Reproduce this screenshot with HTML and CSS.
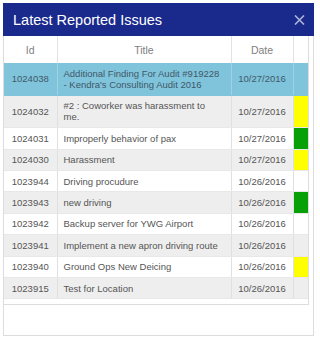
FILE: index.html
```html
<!DOCTYPE html>
<html>
<head>
<meta charset="utf-8">
<link rel="stylesheet" href="styles.css">
</head>
<body>
<div class="panel">
  <div class="panel-head">
    <span class="panel-title">Latest Reported Issues</span>
    <svg class="close" width="11" height="10" viewBox="0 0 11 10"><path d="M1 0.5L10 9.5M10 0.5L1 9.5" stroke="#aeb3d6" stroke-width="1.6" fill="none"/></svg>
  </div>
  <div class="scroll">
    <table class="grid">
      <colgroup><col class="c-id"><col class="c-title"><col class="c-date"><col class="c-flag"></colgroup>
      <thead>
        <tr><th>Id</th><th>Title</th><th>Date</th><th></th></tr>
      </thead>
      <tbody>
        <tr class="sel"><td class="id">1024038</td><td>Additional Finding For Audit #919228 - Kendra's Consulting Audit 2016</td><td class="date">10/27/2016</td><td></td></tr>
        <tr><td class="id">1024032</td><td>#2 : Coworker was harassment to me.</td><td class="date">10/27/2016</td><td class="yellow"></td></tr>
        <tr><td class="id">1024031</td><td>Improperly behavior of pax</td><td class="date">10/27/2016</td><td class="green"></td></tr>
        <tr><td class="id">1024030</td><td>Harassment</td><td class="date">10/27/2016</td><td class="yellow"></td></tr>
        <tr><td class="id">1023944</td><td>Driving procudure</td><td class="date">10/26/2016</td><td></td></tr>
        <tr><td class="id">1023943</td><td>new driving</td><td class="date">10/26/2016</td><td class="green"></td></tr>
        <tr><td class="id">1023942</td><td>Backup server for YWG Airport</td><td class="date">10/26/2016</td><td></td></tr>
        <tr><td class="id">1023941</td><td>Implement a new apron driving route</td><td class="date">10/26/2016</td><td></td></tr>
        <tr><td class="id">1023940</td><td>Ground Ops New Deicing</td><td class="date">10/26/2016</td><td class="yellow"></td></tr>
        <tr><td class="id">1023915</td><td>Test for Location</td><td class="date">10/26/2016</td><td></td></tr>
      </tbody>
    </table>
  </div>
</div>
</body>
</html>
```
FILE: styles.css
```css
html, body {
  margin: 0;
  padding: 0;
  background: #ffffff;
}
body {
  padding: 3px 0 0 3px;
  font-family: "Liberation Sans", Arial, sans-serif;
}
.panel {
  width: 309px;
  height: 331px;
  border: 1px solid #dcdcdc;
  display: flex;
  flex-direction: column;
}
.panel-head {
  margin: -1px -1px 0 -1px;
  height: 33px;
  background: #1a2a8c;
  display: flex;
  align-items: center;
  justify-content: space-between;
  padding: 0 9px 0 10px;
}
.panel-title {
  color: #ffffff;
  font-size: 14.5px;
}
.close {
  display: block;
}
.scroll {
  width: 304px;
  height: 268px;
  border-right: 1px solid #dddddd;
  border-bottom: 1px solid #dddddd;
}
.grid {
  width: 304px;
  border-collapse: collapse;
  table-layout: fixed;
  font-size: 9.5px;
  color: #555555;
}
.c-id { width: 53px; }
.c-title { width: 174px; }
.c-date { width: 62px; }
.c-flag { width: 15px; }
.grid th {
  height: 27px;
  padding: 0;
  font-weight: normal;
  font-size: 10.5px;
  color: #808080;
  text-align: center;
  border-left: 1px solid #e3e3e3;
  background: #ffffff;
}
.grid th:first-child,
.grid td:first-child { border-left: none; }
.grid td {
  padding: 4.6px 9px 4.6px 6px;
  line-height: 11.2px;
  border-left: 1px solid #e0e0e0;
  border-bottom: 1px solid #e8e8e8;
  vertical-align: middle;
}
.grid td.id,
.grid td.date {
  text-align: center;
  padding-left: 2px;
  padding-right: 2px;
}
.grid tbody tr:nth-child(even) td { background: #eeeeee; }
.grid tbody tr.sel td {
  background: #80c4dc;
  color: #3f5868;
  border-left-color: #9fd2e4;
  border-bottom-color: #80c4dc;
}
.grid tbody tr td.yellow { background: #ffff00; }
.grid tbody tr td.green { background: #07a007; }
```
